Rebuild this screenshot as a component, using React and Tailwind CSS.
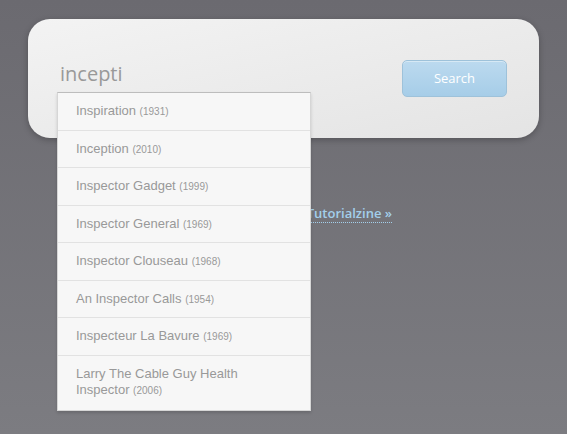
import React from 'react'

const results = [
  ['Inspiration', '1931'],
  ['Inception', '2010'],
  ['Inspector Gadget', '1999'],
  ['Inspector General', '1969'],
  ['Inspector Clouseau', '1968'],
  ['An Inspector Calls', '1954'],
  ['Inspecteur La Bavure', '1969'],
  ['Larry The Cable Guy Health Inspector', '2006'],
]

export default function App() {
  return (
    <div className="min-h-screen bg-gradient-to-b from-[#6b6a70] to-[#7c7c81] pt-[19px] font-['Open_Sans',sans-serif]">
      <div className="mx-[28px] flex h-[119px] w-[511px] items-start justify-between rounded-[22px] bg-gradient-to-br from-[#f3f3f3] to-[#e4e4e4] pl-[29px] pr-[32px] pt-[40px] shadow-[0_2px_6px_rgba(0,0,0,0.25)]">
        <div className="relative z-10 w-[254px]">
          <input
            type="text"
            readOnly
            value="incepti"
            className="block h-[33px] w-full bg-transparent pb-[4px] pl-[3px] text-[20px] text-[#999] outline-none"
          />
          <ul className="absolute left-0 top-full w-[254px] border border-t-[#bdbdbd] border-[#d6d6d6] bg-[#f7f7f7] font-['Liberation_Sans',Arial,sans-serif] shadow-[0_2px_3px_rgba(0,0,0,0.15)]">
            {results.map(([title, year], i) => (
              <li
                key={title}
                className={
                  'py-[10px] pl-[18px] pr-[34px] text-[13px] leading-[16.5px] text-[#999] ' +
                  (i < results.length - 1 ? 'border-b border-[#e2e2e2]' : 'pb-[11px]')
                }
              >
                {title} <span className="text-[10px] leading-none">({year})</span>
              </li>
            ))}
          </ul>
        </div>
        <button className="mt-[1px] h-[37px] w-[105px] rounded-[5px] border border-[#9ec2da] bg-gradient-to-b from-[#bcdaef] to-[#a6cde8] text-[13px] text-white shadow-[inset_0_1px_0_rgba(255,255,255,0.4)]">
          Search
        </button>
      </div>
      <div className="mt-[62px] w-[392px] text-right">
        <a href="#" className="border-b border-dotted border-[#a3cfeb] text-[13px] font-semibold text-[#a3cfeb]">
          Back to Tutorialzine »
        </a>
      </div>
    </div>
  )
}
